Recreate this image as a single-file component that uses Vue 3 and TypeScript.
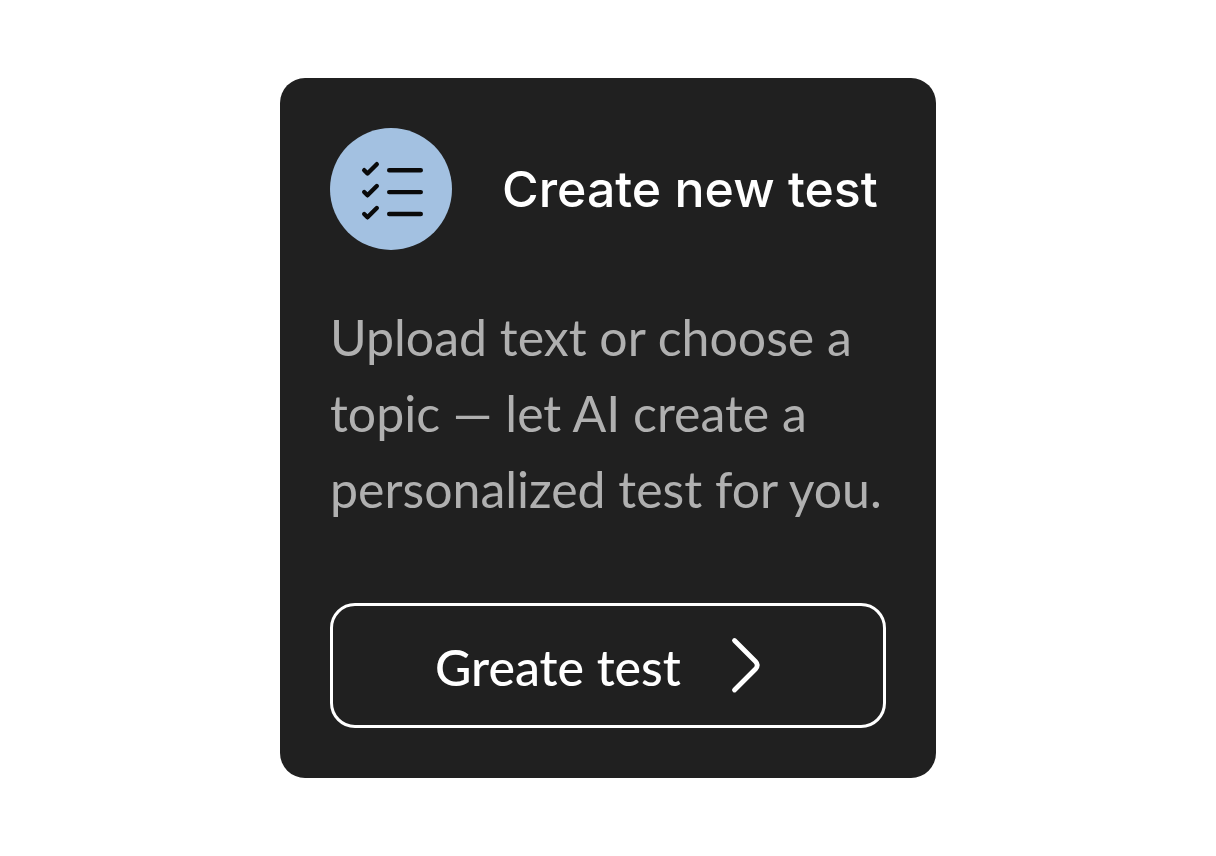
<script setup lang="ts">
const title: string = 'Create new test'
const description: string =
  'Upload text or choose a topic — let AI create a personalized test for you.'
const action: string = 'Greate test'
</script>

<template>
  <main class="page">
    <article class="card">
      <header class="card-header">
        <span class="badge">
          <svg class="list-icon" viewBox="0 0 64 64" aria-hidden="true">
            <path d="M5.2 13.2l3.3 3.3L17.8 7.2M5.2 35l3.3 3.3 9.3-9.3M5.2 57l3.3 3.3 9.3-9.3M30.2 13.2h31.6M30.2 35.1h31.6M30.2 57h31.6" />
          </svg>
        </span>
        <h2 class="title">{{ title }}</h2>
      </header>
      <p class="description">{{ description }}</p>
      <button class="action" type="button">
        <span>{{ action }}</span>
        <svg class="chevron" viewBox="0 0 50 56" aria-hidden="true">
          <path d="M3.5 1.5L24.5 22.5Q28 26.2 24.5 30L3.5 51" />
        </svg>
      </button>
    </article>
  </main>
</template>

<style>
body {
  margin: 0;
  background: #ffffff;
}
</style>

<style scoped>
.page {
  display: flex;
  align-items: center;
  justify-content: center;
  min-height: 100vh;
}

.card {
  box-sizing: border-box;
  width: 100%;
  max-width: 656px;
  padding: 50px;
  border-radius: 25px;
  background: #202020;
  font-family: Lato, sans-serif;
}

.card-header {
  display: flex;
  align-items: center;
  gap: 50px;
}

.badge {
  display: flex;
  flex: none;
  align-items: center;
  justify-content: center;
  width: 122px;
  height: 122px;
  border-radius: 50%;
  background: #a3c1e1;
}

.list-icon {
  width: 64px;
  height: 64px;
  fill: none;
  stroke: #0a0a0a;
  stroke-width: 4.4;
  stroke-linecap: round;
  stroke-linejoin: round;
}

.title {
  margin: 0;
  color: #ffffff;
  font-family: Inter, sans-serif;
  font-size: 50px;
  font-weight: 500;
  line-height: 60px;
  white-space: nowrap;
}

.description {
  margin: 49px 0 76px;
  color: #b0b0b0;
  font-size: 50px;
  line-height: 76px;
}

.action {
  display: flex;
  align-items: center;
  justify-content: center;
  gap: 50px;
  width: 100%;
  padding: 31px 0 28px;
  border: 3px solid #ffffff;
  border-radius: 25px;
  background: transparent;
  color: #ffffff;
  font-family: inherit;
  font-size: 50px;
  font-weight: 500;
  line-height: 60px;
}

.chevron {
  width: 50px;
  height: 56px;
  overflow: visible;
  fill: none;
  stroke: #ffffff;
  stroke-width: 4.8;
  stroke-linecap: round;
}
</style>
